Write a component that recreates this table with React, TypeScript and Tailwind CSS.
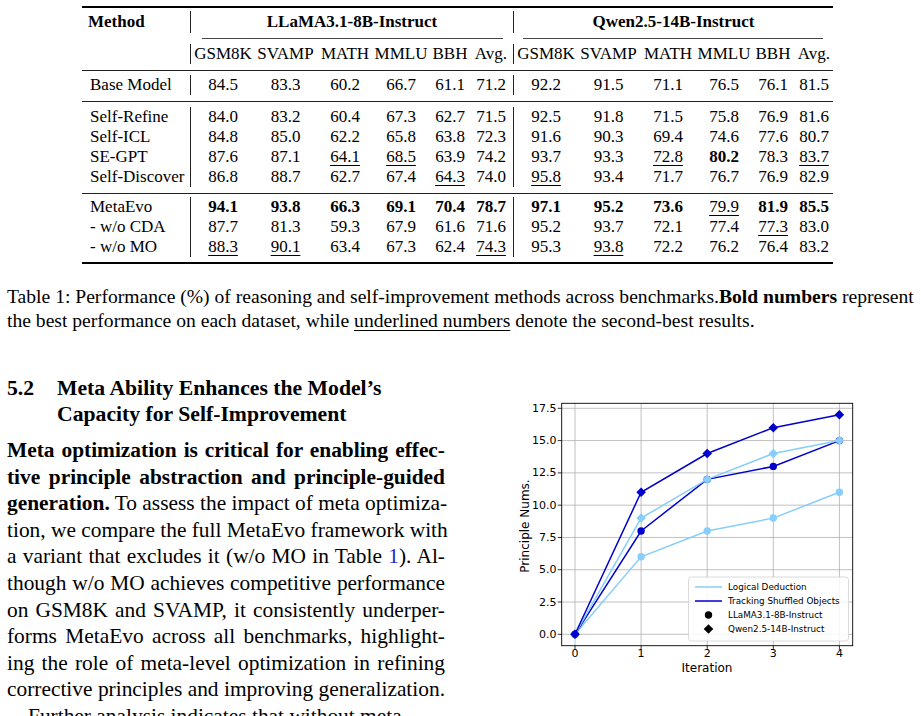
import React from 'react';

const serif = "font-['Liberation_Serif',serif]";

const cols = 'grid grid-cols-[64px_61px_58px_54px_44px_38px] text-center';

const heads = ['GSM8K', 'SVAMP', 'MATH', 'MMLU', 'BBH', 'Avg.'];

// '*' = bold, '_' = underlined (second best)
const blockA = [
  ['Self-Refine', '84.0 83.2 60.4 67.3 62.7 71.5', '92.5 91.8 71.5 75.8 76.9 81.6'],
  ['Self-ICL', '84.8 85.0 62.2 65.8 63.8 72.3', '91.6 90.3 69.4 74.6 77.6 80.7'],
  ['SE-GPT', '87.6 87.1 _64.1 _68.5 63.9 74.2', '93.7 93.3 _72.8 *80.2 78.3 _83.7'],
  ['Self-Discover', '86.8 88.7 62.7 67.4 _64.3 74.0', '_95.8 93.4 71.7 76.7 76.9 82.9'],
];

const blockB = [
  ['MetaEvo', '*94.1 *93.8 *66.3 *69.1 *70.4 *78.7', '*97.1 *95.2 *73.6 _79.9 *81.9 *85.5'],
  ['- w/o CDA', '87.7 81.3 59.3 67.9 61.6 71.6', '95.2 93.7 72.1 77.4 _77.3 83.0'],
  ['- w/o MO', '_88.3 _90.1 63.4 67.3 62.4 _74.3', '95.3 _93.8 72.2 76.2 76.4 83.2'],
];

function Cells({ values }: { values: string }) {
  return (
    <>
      {values.split(' ').map((s, i) => {
        const bold = s.startsWith('*');
        const under = s.startsWith('_');
        const text = s.replace(/^[*_]/, '');
        return (
          <div key={i}>
            <span className={(bold ? 'font-bold ' : '') + (under ? 'underline decoration-1 underline-offset-[3px]' : '')}>{text}</span>
          </div>
        );
      })}
    </>
  );
}

function Row({ name, a, b }: { name: string; a: string; b: string }) {
  return (
    <div className="flex h-[20px] leading-[20px]">
      <div className="w-[108px] pl-2 whitespace-nowrap">{name}</div>
      <div className={'w-[323px] border-l border-[#222] ' + cols}>
        <Cells values={a} />
      </div>
      <div className={'w-[320px] border-l border-[#222] ' + cols}>
        <Cells values={b} />
      </div>
    </div>
  );
}

function Table() {
  return (
    <div className={"ml-[82px] w-[751px] pt-[6px] text-[17px] " + serif}>
      <div className="h-[2px] bg-black" />
      <div className="mt-[3px] flex h-[22px] leading-[22px] font-bold">
        <div className="w-[108px] pl-[6px]">Method</div>
        <div className="w-[323px] border-l border-[#222] text-center">LLaMA3.1-8B-Instruct</div>
        <div className="w-[320px] border-l border-[#222] text-center">Qwen2.5-14B-Instruct</div>
      </div>
      <div className="mt-[5px] flex">
        <div className="w-[108px]" />
        <div className="w-[323px] pl-[12px] pr-[10px]">
          <div className="h-px bg-[#444]" />
        </div>
        <div className="w-[320px] pl-[10px] pr-[10px]">
          <div className="h-px bg-[#444]" />
        </div>
      </div>
      <div className="mt-[5px] flex h-[20px] leading-[20px]">
        <div className="w-[108px]" />
        <div className={'w-[323px] border-l border-[#222] ' + cols}>
          {heads.map((h) => <div key={h}>{h}</div>)}
        </div>
        <div className={'w-[320px] border-l border-[#222] ' + cols}>
          {heads.map((h) => <div key={h}>{h}</div>)}
        </div>
      </div>
      <div className="mt-[6px] h-px bg-[#222]" />
      <div className="pt-[4px] pb-[6px]">
        <Row name="Base Model" a="84.5 83.3 60.2 66.7 61.1 71.2" b="92.2 91.5 71.1 76.5 76.1 81.5" />
      </div>
      <div className="h-px bg-[#222]" />
      <div className="pt-[5px] pb-[6px]">
        {blockA.map((r) => <Row key={r[0]} name={r[0]} a={r[1]} b={r[2]} />)}
      </div>
      <div className="h-px bg-[#222]" />
      <div className="pt-[3px] pb-[5px]">
        {blockB.map((r) => <Row key={r[0]} name={r[0]} a={r[1]} b={r[2]} />)}
      </div>
      <div className="h-[2px] bg-black" />
    </div>
  );
}

const X = (i: number) => 575 + i * 66.1;
const Y = (v: number) => 634.3 - v * 12.914;

const series = [
  { color: '#87CEFA', marker: 'o', data: [0, 6, 8, 9, 11] },
  { color: '#0000CD', marker: 'o', data: [0, 8, 12, 13, 15] },
  { color: '#87CEFA', marker: 'D', data: [0, 9, 12, 14, 15] },
  { color: '#0000CD', marker: 'D', data: [0, 11, 14, 16, 17] },
];

function Marker({ x, y, kind, color }: { x: number; y: number; kind: string; color: string }) {
  if (kind === 'o') return <circle cx={x} cy={y} r={3.7} fill={color} />;
  const r = 4.8;
  return <path d={`M${x} ${y - r}L${x + r} ${y}L${x} ${y + r}L${x - r} ${y}Z`} fill={color} />;
}

function Chart() {
  const yt = [0, 2.5, 5, 7.5, 10, 12.5, 15, 17.5];
  const left = 561.7, right = 852.7, top = 403.3, bottom = 645.7;
  return (
    <svg width={370} height={320} viewBox="505 375 370 320" className="ml-[60px] shrink-0 font-['DejaVu_Sans',sans-serif]">
      {[0, 1, 2, 3, 4].map((i) => (
        <line key={'gx' + i} x1={X(i)} x2={X(i)} y1={top} y2={bottom} stroke="#b0b0b0" strokeWidth={0.8} />
      ))}
      {yt.map((v) => (
        <line key={'gy' + v} x1={left} x2={right} y1={Y(v)} y2={Y(v)} stroke="#b0b0b0" strokeWidth={0.8} />
      ))}
      {series.map((s, k) => (
        <g key={k}>
          <polyline
            points={s.data.map((v, i) => `${X(i)},${Y(v)}`).join(' ')}
            fill="none"
            stroke={s.color}
            strokeWidth={1.5}
          />
          {s.data.map((v, i) => (
            <Marker key={i} x={X(i)} y={Y(v)} kind={s.marker} color={s.color} />
          ))}
        </g>
      ))}
      <rect x={left} y={top} width={right - left} height={bottom - top} fill="none" stroke="#000" strokeWidth={0.9} />
      {[0, 1, 2, 3, 4].map((i) => (
        <g key={'tx' + i}>
          <line x1={X(i)} x2={X(i)} y1={bottom} y2={bottom + 4} stroke="#000" strokeWidth={0.8} />
          <text x={X(i)} y={653.5} fontSize={11} textAnchor="middle" dominantBaseline="central" fill="#000">
            {i}
          </text>
        </g>
      ))}
      {yt.map((v) => (
        <g key={'ty' + v}>
          <line x1={left - 4} x2={left} y1={Y(v)} y2={Y(v)} stroke="#000" strokeWidth={0.8} />
          <text x={556.5} y={Y(v)} fontSize={11} textAnchor="end" dominantBaseline="central" fill="#000">
            {v.toFixed(1)}
          </text>
        </g>
      ))}
      <text x={707} y={667.5} fontSize={12} textAnchor="middle" dominantBaseline="central" fill="#000">
        Iteration
      </text>
      <text
        x={525}
        y={526}
        fontSize={12}
        textAnchor="middle"
        dominantBaseline="central"
        fill="#000"
        transform="rotate(-90 525 526)"
      >
        Principle Nums.
      </text>
      <rect x={688.5} y={577} width={160} height={64} rx={3} fill="#fff" fillOpacity={0.85} stroke="#d0d0d0" strokeWidth={0.8} />
      <line x1={695} x2={722} y1={587} y2={587} stroke="#87CEFA" strokeWidth={1.5} />
      <line x1={695} x2={722} y1={601} y2={601} stroke="#0000CD" strokeWidth={1.5} />
      <Marker x={708.5} y={615} kind="o" color="#000" />
      <Marker x={708.5} y={629} kind="D" color="#000" />
      {['Logical Deduction', 'Tracking Shuffled Objects', 'LLaMA3.1-8B-Instruct', 'Qwen2.5-14B-Instruct'].map((t, i) => (
        <text key={t} x={728} y={587 + i * 14} fontSize={8.8} dominantBaseline="central" fill="#000">
          {t}
        </text>
      ))}
    </svg>
  );
}

const J = "text-justify [text-align-last:justify] whitespace-nowrap";

export default function App() {
  return (
    <div className={"w-[921px] h-[716px] overflow-hidden bg-white text-black " + serif}>
      <Table />
      <div className={"mt-[21px] ml-[7px] text-[19.6px] leading-[24px] whitespace-nowrap " + serif}>
        <div>
          Table 1: Performance (%) of reasoning and self-improvement methods across benchmarks.<b>Bold numbers</b> represent
        </div>
        <div>
          the best performance on each dataset, while <span className="underline decoration-1 underline-offset-[3px]">underlined numbers</span> denote the second-best results.
        </div>
      </div>
      <div className="mt-[42px] flex items-start">
        <div className={"ml-[7px] w-[438px] shrink-0 text-[21.4px] " + serif}>
          <div className="flex font-bold text-[21.7px] leading-[26px]">
            <div className="w-[50px] shrink-0">5.2</div>
            <div>
              <div>Meta Ability Enhances the Model’s</div>
              <div>Capacity for Self-Improvement</div>
            </div>
          </div>
          <div className="mt-[10px] leading-[26.6px]">
            <div className={J + ' font-bold'}>Meta optimization is critical for enabling effec-</div>
            <div className={J + ' font-bold'}>tive principle abstraction and principle-guided</div>
            <div className={J}><b>generation.</b> To assess the impact of meta optimiza-</div>
            <div className={J}>tion, we compare the full MetaEvo framework with</div>
            <div className={J}>a variant that excludes it (w/o MO in Table <span className="text-[#2626c8]">1</span>). Al-</div>
            <div className={J}>though w/o MO achieves competitive performance</div>
            <div className={J}>on GSM8K and SVAMP, it consistently underper-</div>
            <div className={J}>forms MetaEvo across all benchmarks, highlight-</div>
            <div className={J}>ing the role of meta-level optimization in refining</div>
            <div className={J}>corrective principles and improving generalization.</div>
            <div className="pl-[21px] whitespace-nowrap">Further analysis indicates that without meta</div>
          </div>
        </div>
        <Chart />
      </div>
    </div>
  );
}
